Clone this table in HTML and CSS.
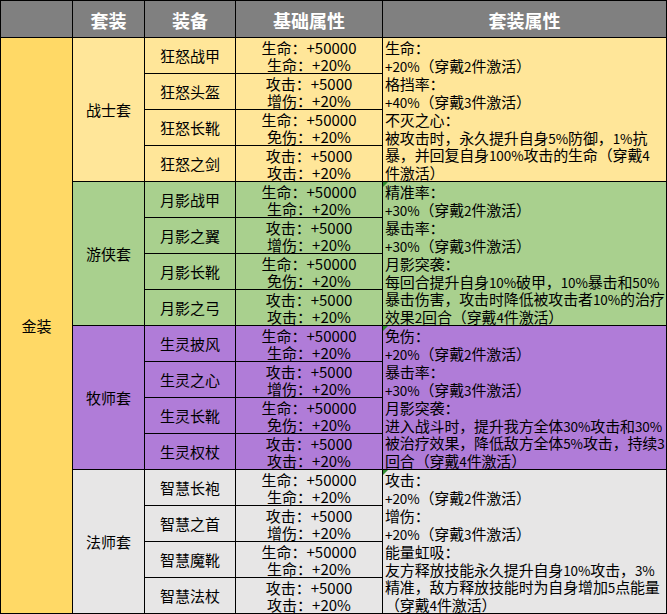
FILE: index.html
```html
<!DOCTYPE html>
<html lang="zh-CN">
<head>
<meta charset="utf-8">
<title>金装套装</title>
<link rel="stylesheet" href="styles.css">
</head>
<body>
<div class="sheet">
  <div class="hd c1"></div>
  <div class="hd c2">套装</div>
  <div class="hd c3">装备</div>
  <div class="hd c4">基础属性</div>
  <div class="hd c5">套装属性</div>

  <div class="grade c1">金装</div>

  <!-- 战士套 -->
  <div class="set c2 warrior">战士套</div>
  <div class="item c3 warrior">狂怒战甲</div>
  <div class="stat c4 warrior"><span>生命：+50000</span><span>生命：+20%</span></div>
  <div class="bonus c5 warrior">生命：<br><span class="n">+20%</span>（穿戴<span class="n">2</span>件激活）<br>格挡率：<br><span class="n">+40%</span>（穿戴<span class="n">3</span>件激活）<br>不灭之心：<br>被攻击时，永久提升自身<span class="n">5%</span>防御，<span class="n">1%</span>抗<br>暴，并回复自身<span class="n">100%</span>攻击的生命（穿戴<span class="n">4</span><br>件激活）</div>
  <div class="item c3 warrior">狂怒头盔</div>
  <div class="stat c4 warrior"><span>攻击：+5000</span><span>增伤：+20%</span></div>
  <div class="item c3 warrior">狂怒长靴</div>
  <div class="stat c4 warrior"><span>生命：+50000</span><span>免伤：+20%</span></div>
  <div class="item c3 warrior">狂怒之剑</div>
  <div class="stat c4 warrior"><span>攻击：+5000</span><span>攻击：+20%</span></div>

  <!-- 游侠套 -->
  <div class="set c2 ranger">游侠套</div>
  <div class="item c3 ranger">月影战甲</div>
  <div class="stat c4 ranger"><span>生命：+50000</span><span>生命：+20%</span></div>
  <div class="bonus c5 ranger flag">精准率：<br><span class="n">+30%</span>（穿戴<span class="n">2</span>件激活）<br>暴击率：<br><span class="n">+30%</span>（穿戴<span class="n">3</span>件激活）<br>月影突袭：<br>每回合提升自身<span class="n">10%</span>破甲，<span class="n">10%</span>暴击和<span class="n">50%</span><br>暴击伤害，攻击时降低被攻击者<span class="n">10%</span>的治疗<br>效果<span class="n">2</span>回合（穿戴<span class="n">4</span>件激活）</div>
  <div class="item c3 ranger">月影之翼</div>
  <div class="stat c4 ranger"><span>攻击：+5000</span><span>增伤：+20%</span></div>
  <div class="item c3 ranger">月影长靴</div>
  <div class="stat c4 ranger"><span>生命：+50000</span><span>免伤：+20%</span></div>
  <div class="item c3 ranger">月影之弓</div>
  <div class="stat c4 ranger"><span>攻击：+5000</span><span>攻击：+20%</span></div>

  <!-- 牧师套 -->
  <div class="set c2 priest">牧师套</div>
  <div class="item c3 priest">生灵披风</div>
  <div class="stat c4 priest"><span>生命：+50000</span><span>生命：+20%</span></div>
  <div class="bonus c5 priest flag">免伤：<br><span class="n">+20%</span>（穿戴<span class="n">2</span>件激活）<br>暴击率：<br><span class="n">+30%</span>（穿戴<span class="n">3</span>件激活）<br>月影突袭：<br>进入战斗时，提升我方全体<span class="n">30%</span>攻击和<span class="n">30%</span><br>被治疗效果，降低敌方全体<span class="n">5%</span>攻击，持续<span class="n">3</span><br>回合（穿戴<span class="n">4</span>件激活）</div>
  <div class="item c3 priest">生灵之心</div>
  <div class="stat c4 priest"><span>攻击：+5000</span><span>增伤：+20%</span></div>
  <div class="item c3 priest">生灵长靴</div>
  <div class="stat c4 priest"><span>生命：+50000</span><span>免伤：+20%</span></div>
  <div class="item c3 priest">生灵权杖</div>
  <div class="stat c4 priest"><span>攻击：+5000</span><span>攻击：+20%</span></div>

  <!-- 法师套 -->
  <div class="set c2 mage">法师套</div>
  <div class="item c3 mage">智慧长袍</div>
  <div class="stat c4 mage"><span>生命：+50000</span><span>生命：+20%</span></div>
  <div class="bonus c5 mage flag">攻击：<br><span class="n">+20%</span>（穿戴<span class="n">2</span>件激活）<br>增伤：<br><span class="n">+20%</span>（穿戴<span class="n">3</span>件激活）<br>能量虹吸：<br>友方释放技能永久提升自身<span class="n">10%</span>攻击，<span class="n">3%</span><br>精准，敌方释放技能时为自身增加<span class="n">5</span>点能量<br>（穿戴<span class="n">4</span>件激活）</div>
  <div class="item c3 mage">智慧之首</div>
  <div class="stat c4 mage"><span>攻击：+5000</span><span>增伤：+20%</span></div>
  <div class="item c3 mage">智慧魔靴</div>
  <div class="stat c4 mage"><span>生命：+50000</span><span>生命：+20%</span></div>
  <div class="item c3 mage">智慧法杖</div>
  <div class="stat c4 mage"><span>攻击：+5000</span><span>攻击：+20%</span></div>
</div>
</body>
</html>
```

FILE: styles.css
```css
html, body {
  margin: 0;
  padding: 0;
  background: #ffffff;
}

.sheet {
  display: grid;
  grid-template-columns: 71px 71px 90px 146px 283px;
  grid-template-rows: 36px repeat(16, 35px);
  gap: 1px;
  padding: 1px;
  width: 665px;
  background: #000000;
  font-family: "Noto Sans CJK SC", "Noto Sans", sans-serif;
  font-size: 15px;
  color: #000000;
}

.c1 { grid-column: 1; }
.c2 { grid-column: 2; }
.c3 { grid-column: 3; }
.c4 { grid-column: 4; }
.c5 { grid-column: 5; }

.hd {
  background: #808080;
  color: #ffffff;
  font-weight: bold;
  font-size: 18px;
  display: flex;
  align-items: center;
  justify-content: center;
  padding-top: 2px;
  line-height: 1;
}

.grade {
  grid-row: span 16;
  background: #ffd966;
  display: flex;
  align-items: center;
  justify-content: center;
}

.set {
  grid-row: span 4;
  display: flex;
  align-items: center;
  justify-content: center;
}

.item {
  display: flex;
  align-items: center;
  justify-content: center;
}

.stat {
  display: flex;
  flex-direction: column;
  align-items: center;
  justify-content: center;
  line-height: 17.5px;
  padding-top: 1px;
  white-space: nowrap;
}

.bonus {
  grid-row: span 4;
  position: relative;
  line-height: 17.9px;
  padding: 1px 0 0 2px;
  white-space: nowrap;
  letter-spacing: -0.15px;
}

.n {
  font-size: 13.5px;
  line-height: 1;
  letter-spacing: -0.1px;
}

.flag::before {
  content: "";
  position: absolute;
  top: 0;
  left: 0;
  width: 0;
  height: 0;
  border-top: 5px solid #2e8b2e;
  border-right: 5px solid transparent;
}

.warrior { background: #ffe699; }
.ranger { background: #a9d08e; }
.priest { background: #b07cd8; }
.mage { background: #e7e6e6; }
```
